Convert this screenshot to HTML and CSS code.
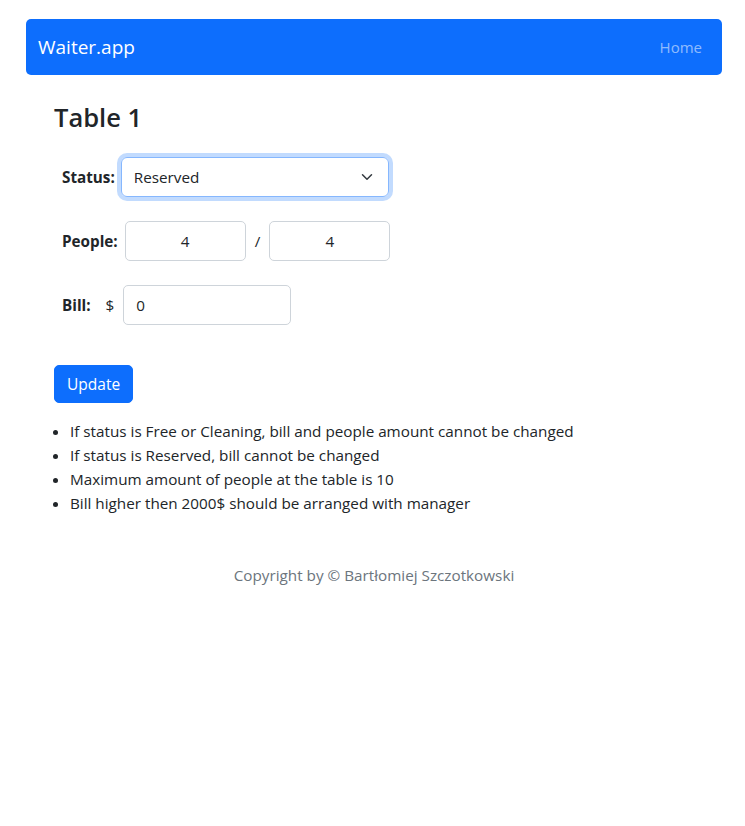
FILE: index.html
```html
<!DOCTYPE html>
<html lang="en">
<head>
<meta charset="utf-8">
<title>Waiter.app</title>
<link rel="stylesheet" href="styles.css">
</head>
<body>
<div class="page">
  <nav class="navbar">
    <span class="brand">Waiter.app</span>
    <span class="nav-link">Home</span>
  </nav>
  <main class="content">
    <h2 class="title">Table 1</h2>
    <div class="form-row">
      <span class="label label-status">Status:</span>
      <div class="select focus">
        <span>Reserved</span>
        <svg class="chev" width="16" height="12" viewBox="0 0 16 16"><path d="m2 5 6 6 6-6" fill="none" stroke="#343a40" stroke-width="2" stroke-linecap="round" stroke-linejoin="round"/></svg>
      </div>
    </div>
    <div class="form-row">
      <span class="label label-people">People:</span>
      <div class="input center">4</div>
      <span class="sep">/</span>
      <div class="input center">4</div>
    </div>
    <div class="form-row">
      <span class="label label-bill">Bill:</span>
      <span class="dollar">$</span>
      <div class="input bill">0</div>
    </div>
    <button class="btn">Update</button>
    <ul class="rules">
      <li>If status is Free or Cleaning, bill and people amount cannot be changed</li>
      <li>If status is Reserved, bill cannot be changed</li>
      <li>Maximum amount of people at the table is 10</li>
      <li>Bill higher then 2000$ should be arranged with manager</li>
    </ul>
  </main>
  <footer class="footer">Copyright by © Bartłomiej Szczotkowski</footer>
</div>
</body>
</html>
```
FILE: styles.css
```css
* { box-sizing: border-box; }
body {
  margin: 0;
  font-family: "Open Sans", "Noto Sans", sans-serif;
  font-size: 15.25px;
  line-height: 24px;
  color: #212529;
  background: #fff;
}
.page {
  padding: 19px 23px 0 26px;
}
.navbar {
  height: 56px;
  background: #0d6efd;
  border-radius: 5px;
  display: flex;
  align-items: center;
  justify-content: space-between;
  padding: 0 20px 0 12px;
}
.brand {
  color: #fff;
  font-size: 19px;
}
.nav-link {
  color: rgba(255,255,255,.55);
  font-size: 15px;
}
.content {
  padding: 25px 0 0 28px;
}
.title {
  margin: 0 0 23px;
  font-size: 25.5px;
  line-height: 34px;
  font-weight: 600;
}
.form-row {
  display: flex;
  align-items: center;
  height: 40px;
  margin: 0 0 24px 8px;
}
.label {
  font-weight: 700;
  margin-right: 7px;
}
.label-status { margin-right: 6px; }
.label-bill { margin-right: 15px; }
.select {
  width: 268px;
  height: 40px;
  border: 1px solid #86b7fe;
  border-radius: 6px;
  display: flex;
  align-items: center;
  justify-content: space-between;
  padding: 0 13px 0 12px;
}
.focus {
  box-shadow: 0 0 0 4px rgba(13,110,253,.25);
}
.input {
  height: 40px;
  border: 1px solid #ced4da;
  border-radius: 5px;
  display: flex;
  align-items: center;
  padding: 0 12px;
}
.center {
  width: 121px;
  justify-content: center;
}
.sep {
  margin: 0 9px;
}
.dollar {
  margin-right: 9px;
}
.bill {
  width: 168px;
}
.btn {
  display: block;
  margin: 40px 0 0 0;
  height: 38px;
  padding: 0 12px;
  background: #0d6efd;
  color: #fff;
  border: 1px solid #0d6efd;
  border-radius: 5px;
  font: inherit;
  font-size: 15.5px;
}
.rules {
  margin: 16px 0 0;
  padding: 0 0 0 16px;
}
.footer {
  text-align: center;
  color: #6c757d;
  margin-top: 48px;
}
```
